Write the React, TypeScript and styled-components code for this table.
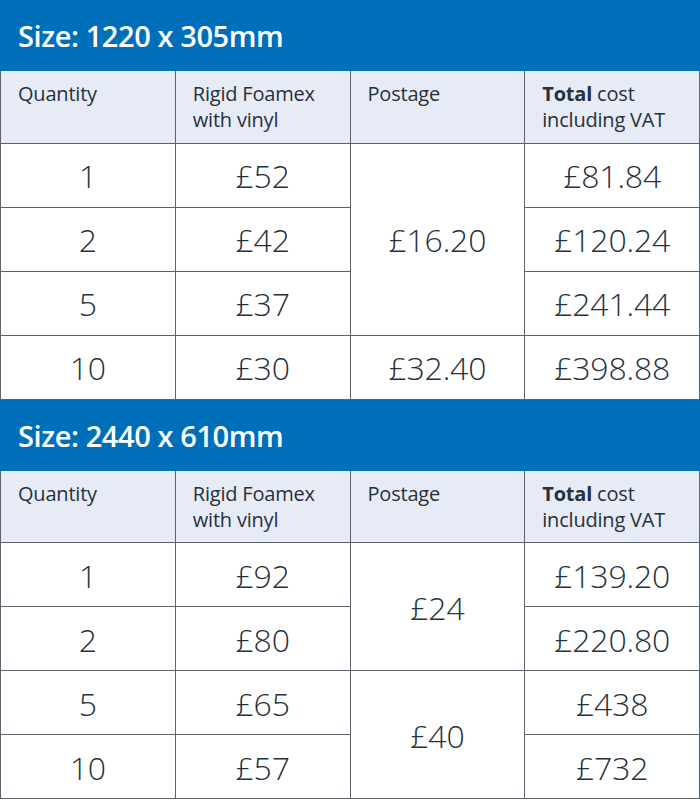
import React from "react";
import styled, { createGlobalStyle } from "styled-components";

const Global = createGlobalStyle`
  html, body { margin: 0; padding: 0; background: #ffffff; }
  body { font-family: "Open Sans", "Noto Sans", sans-serif; color: #27313b; }
`;

const Page = styled.div`
  width: 700px;
  display: flex;
  flex-direction: column;
`;

const TitleBar = styled.div`
  background: #006fb9;
  color: #ffffff;
  height: 71px;
  box-sizing: border-box;
  padding: 0 0 0 18px;
  display: flex;
  align-items: center;
  font-size: 29px;
  font-weight: 600;
  letter-spacing: -0.4px;
`;

const Table = styled.table`
  width: 700px;
  border-collapse: collapse;
  table-layout: fixed;
`;

const HeadCell = styled.th`
  background: #e6ebf6;
  border: 1px solid #5b636d;
  border-top: none;
  height: 72px;
  box-sizing: border-box;
  padding: 10px 10px 0 17px;
  vertical-align: top;
  text-align: left;
  font-size: 20px;
  line-height: 26px;
  font-weight: 400;
  letter-spacing: -0.2px;
  color: #27313b;
`;

const Strong = styled.b`
  font-weight: 700;
`;

const Cell = styled.td`
  border: 1px solid #5b636d;
  height: 64px;
  box-sizing: border-box;
  padding: 1px 0 0;
  text-align: center;
  vertical-align: middle;
  font-size: 32px;
  font-weight: 300;
  letter-spacing: -0.2px;
  color: #27313b;
`;

type Row = { qty: string; price: string; post?: { text: string; span: number }; total: string };

const sections: { title: string; rows: Row[] }[] = [
  {
    title: "Size: 1220 x 305mm",
    rows: [
      { qty: "1", price: "£52", post: { text: "£16.20", span: 3 }, total: "£81.84" },
      { qty: "2", price: "£42", total: "£120.24" },
      { qty: "5", price: "£37", total: "£241.44" },
      { qty: "10", price: "£30", post: { text: "£32.40", span: 1 }, total: "£398.88" },
    ],
  },
  {
    title: "Size: 2440 x 610mm",
    rows: [
      { qty: "1", price: "£92", post: { text: "£24", span: 2 }, total: "£139.20" },
      { qty: "2", price: "£80", total: "£220.80" },
      { qty: "5", price: "£65", post: { text: "£40", span: 2 }, total: "£438" },
      { qty: "10", price: "£57", total: "£732" },
    ],
  },
];

export default function App() {
  return (
    <Page>
      <Global />
      {sections.map((s) => (
        <React.Fragment key={s.title}>
          <TitleBar>{s.title}</TitleBar>
          <Table>
            <thead>
              <tr>
                <HeadCell>Quantity</HeadCell>
                <HeadCell>Rigid Foamex with vinyl</HeadCell>
                <HeadCell>Postage</HeadCell>
                <HeadCell>
                  <Strong>Total</Strong> cost including VAT
                </HeadCell>
              </tr>
            </thead>
            <tbody>
              {s.rows.map((r) => (
                <tr key={r.qty}>
                  <Cell>{r.qty}</Cell>
                  <Cell>{r.price}</Cell>
                  {r.post && <Cell rowSpan={r.post.span}>{r.post.text}</Cell>}
                  <Cell>{r.total}</Cell>
                </tr>
              ))}
            </tbody>
          </Table>
        </React.Fragment>
      ))}
    </Page>
  );
}
